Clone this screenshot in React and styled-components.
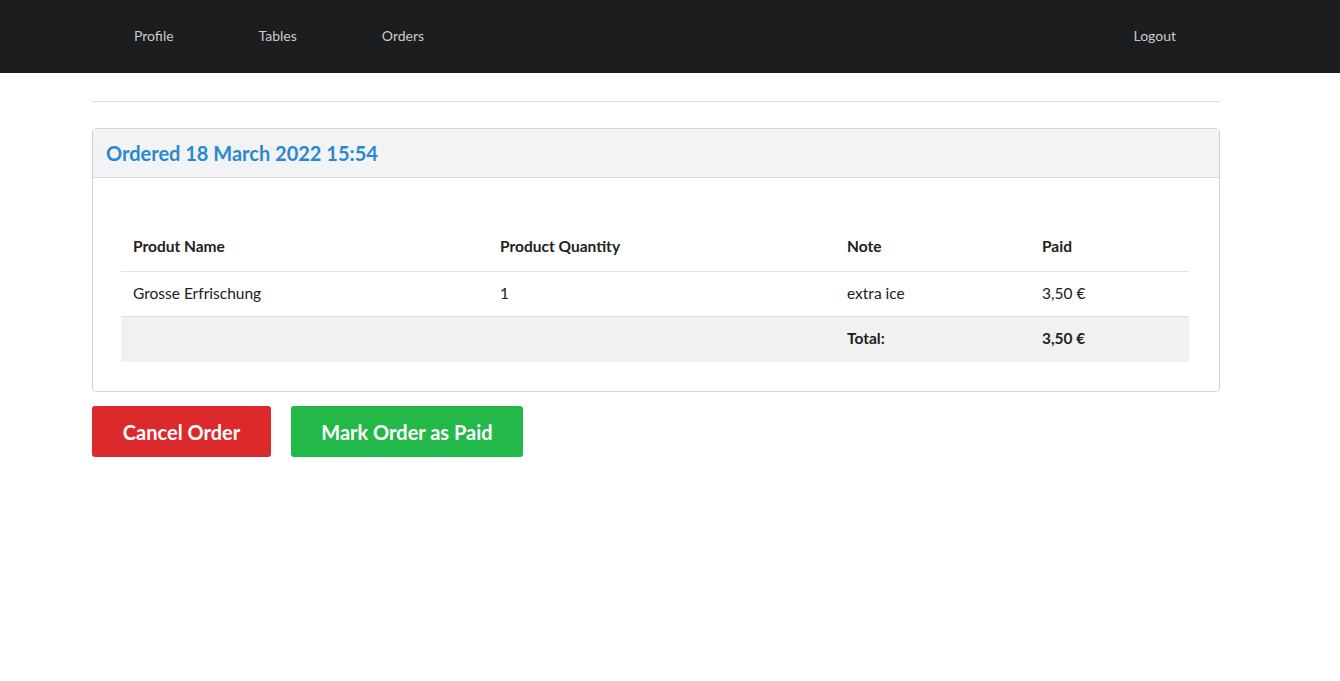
import styled, { createGlobalStyle } from 'styled-components';

const GlobalStyle = createGlobalStyle`
    body {
        margin: 0;
        background: #ffffff;
        font-family: Lato, "Open Sans", sans-serif;
        color: #212529;
    }
`;

const links = ['Profile', 'Tables', 'Orders'];

const items = [
    { name: 'Grosse Erfrischung', qty: 1, note: 'extra ice', paid: '3,50 €' },
];

export default function App(){
    return(
        <>
            <GlobalStyle />
            <Nav>
                <NavContainer>
                    <NavMenu>
                        { links.map((l)=>(
                            <NavLink key={ l } href="#">{ l }</NavLink>
                        )) }
                    </NavMenu>
                    <NavLink href="#">Logout</NavLink>
                </NavContainer>
            </Nav>
            <Main>
                <Divider />
                <Card>
                    <CardHeader>
                        <Title>Ordered 18 March 2022 15:54</Title>
                    </CardHeader>
                    <CardBody>
                        <Table>
                            <colgroup>
                                <col style={ { width: 367 } } />
                                <col style={ { width: 347 } } />
                                <col style={ { width: 195 } } />
                                <col />
                            </colgroup>
                            <thead>
                                <tr>
                                    <Th>Produt Name</Th>
                                    <Th>Product Quantity</Th>
                                    <Th>Note</Th>
                                    <Th>Paid</Th>
                                </tr>
                            </thead>
                            <tbody>
                                { items.map((i)=>(
                                    <tr key={ i.name }>
                                        <Td>{ i.name }</Td>
                                        <Td>{ i.qty }</Td>
                                        <Td>{ i.note }</Td>
                                        <Td>{ i.paid }</Td>
                                    </tr>
                                )) }
                                <TotalRow>
                                    <Td />
                                    <Td />
                                    <Td $bold>Total:</Td>
                                    <Td $bold>3,50 €</Td>
                                </TotalRow>
                            </tbody>
                        </Table>
                    </CardBody>
                </Card>
                <Actions>
                    <Button $color="#dc292b">Cancel Order</Button>
                    <Button $color="#22b949" $wide>Mark Order as Paid</Button>
                </Actions>
            </Main>
        </>
    );
}

const Nav = styled.nav`
    width: 100%;
    height: 73px;
    background-color: #1c1d1f;
    display: flex;
    align-items: center;
    padding-bottom: 2px;
    box-sizing: border-box;
`;

const NavContainer = styled.div`
    width: 1126px;
    margin-left: 92px;
    display: flex;
    justify-content: space-between;
    align-items: center;
`;

const NavMenu = styled.div`
    display: flex;
    gap: 1px;
`;

const NavLink = styled.a`
    padding: 0 42px;
    font-size: 14px;
    color: #c9cbcd;
    text-decoration: none;
    line-height: 20px;
`;

const Main = styled.main`
    width: 1128px;
    margin-left: 92px;
    padding-top: 28px;
`;

const Divider = styled.hr`
    margin: 0 0 26px;
    border: 0;
    border-top: 1px solid #dcdcdc;
`;

const Card = styled.section`
    border: 1px solid #d2d2d2;
    border-radius: 4px;
    overflow: hidden;
`;

const CardHeader = styled.header`
    height: 49px;
    background-color: #f2f3f4;
    border-bottom: 1px solid #d9d9d9;
    display: flex;
    align-items: center;
    padding: 0 13px 1px;
    box-sizing: border-box;
`;

const Title = styled.h2`
    margin: 0;
    font-size: 20px;
    font-weight: 700;
    color: #2a88d2;
`;

const CardBody = styled.div`
    padding: 46px 30px 29px 28px;
`;

const Table = styled.table`
    width: 100%;
    border-collapse: collapse;
    table-layout: fixed;
    font-size: 15.5px;
`;

const Th = styled.th`
    text-align: left;
    font-weight: 700;
    color: #212121;
    height: 43px;
    padding: 0 12px 4px;
    border-bottom: 1px solid #e4e4e4;
`;

const Td = styled.td`
    height: 42px;
    padding: 0 12px 2px;
    color: #212121;
    font-weight: ${ ({ $bold })=> $bold ? 700 : 400 };
    border-bottom: 1px solid #dddddd;
`;

const TotalRow = styled.tr`
    background-color: #f1f1f1;

    td {
        border-bottom: 0;
        height: 42px;
        padding-bottom: 3px;
    }
`;

const Actions = styled.div`
    display: flex;
    gap: 20px;
    margin-top: 14px;
`;

const Button = styled.button`
    height: 51px;
    width: ${ ({ $wide })=> $wide ? '232px' : '179px' };
    border: 0;
    border-radius: 3px;
    background-color: ${ ({ $color })=> $color };
    color: #ffffff;
    font-family: Lato, "Open Sans", sans-serif;
    font-size: 20px;
    font-weight: 700;
    cursor: pointer;
`;
